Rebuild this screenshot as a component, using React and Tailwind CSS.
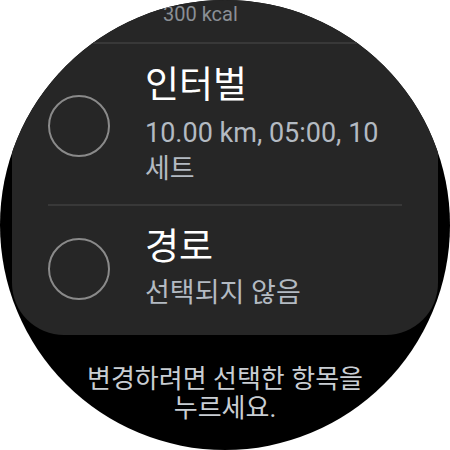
import React from 'react';

const font = { fontFamily: "Roboto, 'Noto Sans CJK KR', sans-serif" };

const Radio = () => (
  <div className="w-[62px] h-[62px] shrink-0 rounded-full border-2 border-[#8a8a8a]" />
);

const Row = ({ title, lines, className, subClass }) => (
  <div className={`flex items-center ${className}`}>
    <div className="pl-[36px] pr-[35px]">
      <Radio />
    </div>
    <div className="flex flex-col">
      <div className="text-[37px] leading-[44px] text-white">{title}</div>
      <div className={`text-[27px] leading-[36px] text-[#b3bac2] ${subClass}`}>
        {lines.map((l) => (
          <div key={l}>{l}</div>
        ))}
      </div>
    </div>
  </div>
);

export default function App() {
  return (
    <div className="w-[450px] h-[450px] bg-white" style={font}>
      <div className="w-[450px] h-[450px] rounded-full overflow-hidden bg-black flex flex-col">
        <div className="mx-[12px] bg-[#262626] rounded-b-[52px] flex flex-col">
          <div className="h-[42px] pl-[151px] pt-[1px] text-[20px] leading-[26px] text-[#8a8f95]">
            300 kcal
          </div>
          <div className="mx-[36px] h-[2px] bg-[#383838]" />
          <Row
            title="인터벌"
            lines={['10.00 km, 05:00, 10', '세트']}
            className="pt-[20px] pb-[17px]"
            subClass="mt-[7px]"
          />
          <div className="mx-[36px] h-[2px] bg-[#383838]" />
          <Row
            title="경로"
            lines={['선택되지 않음']}
            className="pt-[20px] pb-[24px]"
            subClass="mt-[5px]"
          />
        </div>
        <div className="mt-[30px] text-center text-[26px] leading-[29px] text-[#c9ced3]">
          <div>변경하려면 선택한 항목을</div>
          <div>누르세요.</div>
        </div>
      </div>
    </div>
  );
}
